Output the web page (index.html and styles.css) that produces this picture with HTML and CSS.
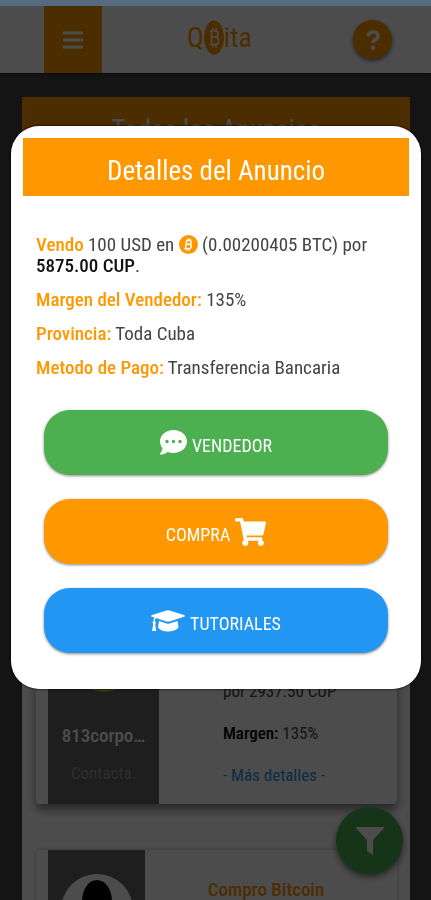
FILE: index.html
```html
<!DOCTYPE html>
<html lang="es">
<head>
<meta charset="utf-8">
<meta name="viewport" content="width=device-width, initial-scale=1">
<title>Qbita</title>
<link rel="stylesheet" href="styles.css">
</head>
<body>
<div class="page">
  <div class="status"></div>
  <header class="nav">
    <button class="menu" aria-label="Menu">
      <svg width="20" height="18" viewBox="0 0 20 18"><path d="M0 2h20M0 9h20M0 16h20" stroke="#fff" stroke-width="3"/></svg>
    </button>
    <div class="logo">Q<svg width="20" height="35" viewBox="0 0 20 35"><ellipse cx="10" cy="17.500" rx="10" ry="17" fill="#ff9800"/><path d="M7.500 10.500v14M6 11h5q3 0 3 3t-3 3H8M11 17q3.500 0 3.500 3.700T11 24.500H6M9 8v3M12 8v3M9 24.500v3M12 24.500v3" fill="none" stroke="#fff" stroke-width="1.600"/></svg>ita</div>
    <button class="help" aria-label="Ayuda">
      <svg width="14" height="20" viewBox="0 0 14 20"><path d="M2 6Q3 2 7 2Q12 2 12 6Q12 8.500 9.500 9.500Q7 10.500 7 13" fill="none" stroke="#fff" stroke-width="3.600"/><circle cx="7" cy="17.600" r="2.300" fill="#fff"/></svg>
    </button>
  </header>
  <main class="list">
    <h1 class="banner">Todos los Anuncios</h1>
    <article class="ad ad-first">
      <div class="user">
        <div class="avatar"></div>
        <strong>813corpo…</strong>
        <span class="contact">Contacta.</span>
      </div>
      <div class="info">
        <p>por 2937.50 CUP</p>
        <p><b>Margen:</b> 135%</p>
        <p><a href="#detalles">- Más detalles -</a></p>
      </div>
    </article>
    <article class="ad ad-next">
      <div class="user user-small">
        <svg width="72" height="72" viewBox="0 0 72 72"><circle cx="36" cy="36" r="36" fill="#fff"/><ellipse cx="36" cy="27" rx="15" ry="21" fill="#000"/></svg>
      </div>
      <h2>Compro Bitcoin</h2>
    </article>
  </main>
</div>
<button class="filter" aria-label="Filtrar">
  <svg width="28" height="28" viewBox="0 0 28 28"><path d="M0 0h28v1L17 13v15l-6-4V13L0 1z" fill="#fff"/></svg>
</button>
<div class="overlay">
  <section class="modal" id="detalles" role="dialog" aria-labelledby="titulo">
    <h2 class="title" id="titulo">Detalles del Anuncio</h2>
    <div class="details">
      <p><b class="key">Vendo</b> 100 USD en <svg class="coin" width="19" height="19" viewBox="0 0 19 19"><circle cx="9.500" cy="9.500" r="9.500" fill="#ff9800"/><path d="M7.700 5L6.500 14M7.500 5.500h3q2 0 1.800 1.900T10.200 9.300H7.200M10.200 9.300q2.300 0 2 2.200t-2.600 2.200H5.500M9 3.500v2M11.200 3.800v2M8 13.500v2M10.200 13.500v2" fill="none" stroke="#fff" stroke-width="1.500"/></svg> (0.00200405 BTC) por <b>5875.00 CUP</b>.</p>
      <p><b class="key">Margen del Vendedor:</b> 135%</p>
      <p><b class="key">Provincia:</b> Toda Cuba</p>
      <p><b class="key">Metodo de Pago:</b> Transferencia Bancaria</p>
    </div>
    <div class="actions">
      <button class="btn green">
        <svg width="27" height="25" viewBox="0 0 27 25"><path fill="#fff" fill-rule="evenodd" d="M13.500 0C6 0 0 5 0 11.500 0 14 1 16.300 2.500 18.200 2.200 20.500 1 22.300.3 23.200-.2 24 .2 24.700 1 24.600 3.700 24.500 6 23.300 7.500 22.100 9.300 22.700 11.300 23 13.500 23 21 23 27 18 27 11.500S21 0 13.500 0ZM7 9.800A1.700 1.700 0 1 1 7 13.200 1.700 1.700 0 1 1 7 9.800ZM13.500 9.800A1.700 1.700 0 1 1 13.500 13.200 1.700 1.700 0 1 1 13.500 9.800ZM20 9.800A1.700 1.700 0 1 1 20 13.200 1.700 1.700 0 1 1 20 9.800Z"/></svg>
        <span>VENDEDOR</span>
      </button>
      <button class="btn orange">
        <span>COMPRA</span>
        <svg width="31" height="28" viewBox="0 0 576 512" preserveAspectRatio="none"><path fill="#fff" d="M528.100 301.300l47.300-208C578.800 78.300 567.400 64 552 64H159.200l-9.200-44.800C147.800 8 137.900 0 126.500 0H24C10.700 0 0 10.700 0 24v16c0 13.300 10.700 24 24 24h69.900l70.200 343.400C147.300 417.100 136 435.200 136 456c0 30.900 25.100 56 56 56s56-25.100 56-56c0-15.700-6.400-29.800-16.800-40h209.600C430.400 426.200 424 440.300 424 456c0 30.900 25.100 56 56 56s56-25.100 56-56c0-22.200-12.900-41.300-31.600-50.400l5.500-24.300c3.400-15-8-29.300-23.400-29.300H218.100l-6.500-32h293.100c11.200 0 20.900-7.800 23.400-18.700z"/></svg>
      </button>
      <button class="btn blue">
        <svg width="34" height="22" viewBox="0 0 34 22"><path fill="#fff" d="M15.500.4q1.500-.5 3 0L33 5q1.800.9 0 1.800l-14.500 4.600q-1.500.4-3 0L5 8.100Q3.900 9.200 3.800 11q1.700 1.500.4 3l1 7H1l1.200-7q-1.300-1.500.3-3Q2.600 8.900 3.500 7.600L1 6.800Q-.8 5.900 1 5ZM8 11l7.500 2.600q1.500.4 3 0L26.500 11l1 6.500Q24 21.500 17 21.500T7 17.500Z"/></svg>
        <span>TUTORIALES</span>
      </button>
    </div>
  </section>
</div>
</body>
</html>
```
FILE: styles.css
```css
* { box-sizing: border-box; }
body {
  margin: 0;
  height: 100vh;
  overflow: hidden;
  background: #444;
  color: #444;
  font: 18px/21px "Roboto Condensed", "Liberation Sans Narrow", Roboto, sans-serif;
}
button { border: 0; padding: 0; color: #fff; font: inherit; }
h1, h2, p { margin: 0; font-weight: 400; }
b { font-weight: 500; }
.page { height: 100vh; overflow: hidden; }
.status { height: 6px; background: #566a80; position: relative; z-index: 3; }
.nav {
  height: 67px;
  display: flex;
  align-items: center;
  justify-content: space-between;
  padding: 0 39px 0 44px;
  background: #fff;
  box-shadow: 0 1px 3px #222;
}
.menu { width: 58px; height: 67px; display: grid; place-items: center; background: #ff9800; }
.logo { display: flex; align-items: center; padding: 0 16px 4px 0; color: #ff9800; font-size: 28px; }
.help {
  width: 39px;
  height: 39px;
  border-radius: 50%;
  display: grid;
  place-items: center;
  background: #ff9800;
  box-shadow: 0 2px 4px #777;
}
.list { margin: 24px 21px 0 22px; background: #fff; }
.banner { padding: 20px 0; text-align: center; background: #ff9800; color: #fff; font-size: 27px; line-height: 26px; }
.ad { display: flex; margin: 0 13px 46px 14px; padding-left: 12px; border-radius: 4px; background: #fff; }
.ad-first { margin-top: 24px; height: 617px; box-shadow: 0 6px 10px #888; }
.ad-next { height: 200px; box-shadow: 0 0 4px #bbb; }
.user {
  width: 111px;
  display: flex;
  flex-direction: column;
  justify-content: flex-end;
  align-items: center;
  gap: 17px;
  padding-bottom: 20px;
  background: #666;
  color: #fff;
}
.user strong { font-size: 19px; font-weight: 500; }
.contact { color: #999; font-size: 17px; }
.avatar { width: 64px; height: 64px; margin-bottom: 16px; border-radius: 50%; background: #bcc800; }
.user-small { width: 97px; justify-content: flex-start; padding-top: 24px; }
.info {
  flex: 1;
  display: flex;
  flex-direction: column;
  justify-content: flex-end;
  gap: 21px;
  padding: 0 0 18px 64px;
  font-size: 17px;
  white-space: nowrap;
}
.info b { color: #000; }
a { color: #2196f3; text-decoration: none; }
.ad-next h2 { flex: 1; padding: 29px 10px 0 0; text-align: center; color: #ff9800; font-size: 19px; font-weight: 500; }
.filter {
  position: fixed;
  right: 28px;
  bottom: 26px;
  width: 67px;
  height: 67px;
  border-radius: 50%;
  display: grid;
  place-items: center;
  background: #4caf50;
  box-shadow: 0 3px 6px #777;
}
.overlay {
  position: fixed;
  inset: 0;
  z-index: 2;
  padding: 126px 10px 0 11px;
  background: rgba(0, 0, 0, .7);
}
.modal {
  padding: 12px 12px 36px;
  border-radius: 28px;
  background: #fff;
  box-shadow: 0 0 3px #000;
}
.title { padding: 20px 0 11px; background: #ff9800; color: #fff; text-align: center; font-size: 27px; line-height: 27px; }
.details { display: grid; gap: 13px; padding: 38px 13px 0; font-size: 19px; }
.details b { color: #111; }
.details .key { color: #ff9800; }
.coin { vertical-align: -3px; }
.actions { display: grid; gap: 24px; padding: 32px 21px 0; }
.btn {
  height: 65px;
  border-radius: 26px;
  display: flex;
  align-items: center;
  justify-content: center;
  gap: 5px;
  box-shadow: 0 1px 3px #888;
}
.btn span { padding-top: 6px; }
.green { background: #4caf50; }
.orange { background: #ff9800; }
.blue { background: #2196f3; }
```
